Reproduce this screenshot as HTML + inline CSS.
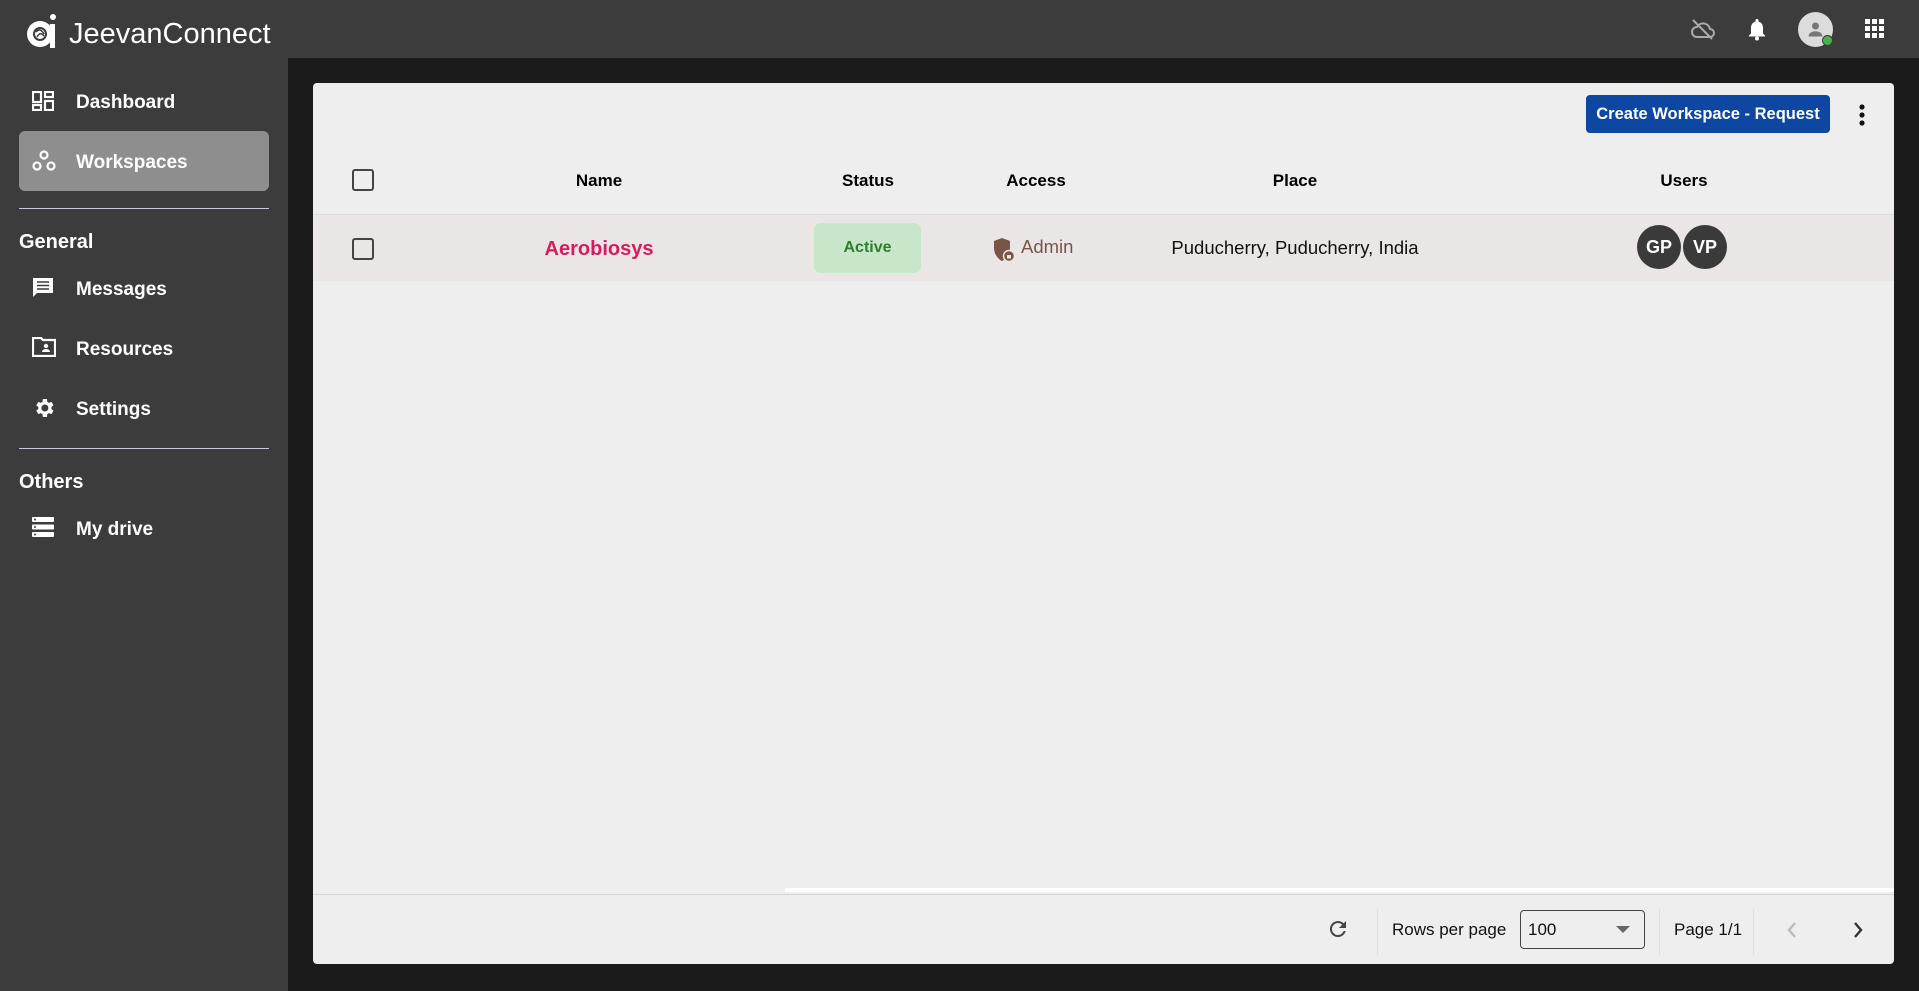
<!DOCTYPE html>
<html><head><meta charset="utf-8"><style>
*{box-sizing:border-box;margin:0;padding:0}
body{width:1919px;height:991px;overflow:hidden;background:#1b1b1b;font-family:"Liberation Sans","DejaVu Sans",sans-serif;position:relative}
.top{position:absolute;left:0;top:0;width:1919px;height:58px;background:#3c3c3c}
.side{position:absolute;left:0;top:58px;width:288px;height:933px;background:#3c3c3c;color:#fff}
.nav{position:absolute;left:76px;font-size:19px;font-weight:bold;color:#fff}
.ico{position:absolute;left:32px}
.sec{position:absolute;left:19px;font-size:20px;font-weight:bold}
.hr{position:absolute;left:19px;width:250px;height:1px;background:#c9c6d6}
.card{position:absolute;left:313px;top:83px;width:1581px;height:881px;background:#eeeeee;border-radius:4px;overflow:hidden}
.abs{position:absolute}
.th{position:absolute;top:170px;font-size:17px;font-weight:bold;color:#000;transform:translateX(-50%)}
.cb{position:absolute;width:22px;height:22px;border:2.5px solid #444;border-radius:3px}
</style></head><body>
<div class="top">
 <svg class="abs" style="left:26px;top:12px" width="32" height="38" viewBox="0 0 32 38"><circle cx="14" cy="22" r="13" fill="#fff"/><circle cx="14" cy="22" r="6" fill="none" stroke="#3c3c3c" stroke-width="2"/><path d="M10 20 q4 -5 8 2 M11 25 q3 -6 7 -1" stroke="#3c3c3c" stroke-width="1.5" fill="none"/><rect x="24" y="12" width="5" height="24" fill="#fff"/><circle cx="27" cy="5" r="3" fill="#fff"/></svg>
 <div class="abs" style="left:69px;top:18px;font-size:29px;color:#fff">JeevanConnect</div>
 <svg class="abs" style="left:1690px;top:17px" width="26" height="24" viewBox="0 0 26 24"><path d="M7 20h13a4 4 0 0 0 0-8 7 7 0 0 0-13-2 5 5 0 0 0 0 10z" fill="none" stroke="#aaa" stroke-width="2"/><path d="M3 3l19 19" stroke="#aaa" stroke-width="2"/></svg>
 <svg class="abs" style="left:1747px;top:17px" width="20" height="24" viewBox="0 0 20 24"><path d="M10 2a1.5 1.5 0 0 1 1.5 1.5v1a6 6 0 0 1 4.5 6v6l2 2v1H2v-1l2-2v-6a6 6 0 0 1 4.5-6v-1A1.5 1.5 0 0 1 10 2z" fill="#fff"/><circle cx="10" cy="21.5" r="2" fill="#fff"/></svg>
 <div class="abs" style="left:1798px;top:12px;width:35px;height:35px;border-radius:50%;background:#dcdcdc"></div>
 <svg class="abs" style="left:1805px;top:19px" width="21" height="21" viewBox="0 0 24 24"><circle cx="12" cy="8" r="4" fill="#777"/><path d="M4 20c0-4 4-6 8-6s8 2 8 6z" fill="#777"/></svg>
 <div class="abs" style="left:1822px;top:35px;width:11px;height:11px;border-radius:50%;background:#4caf50;border:1.5px solid #3c3c3c"></div>
 <svg class="abs" style="left:1865px;top:19px" width="19" height="19" viewBox="0 0 19 19" fill="#fff"><rect x="0" y="0" width="5" height="5"/><rect x="7" y="0" width="5" height="5"/><rect x="14" y="0" width="5" height="5"/><rect x="0" y="7" width="5" height="5"/><rect x="7" y="7" width="5" height="5"/><rect x="14" y="7" width="5" height="5"/><rect x="0" y="14" width="5" height="5"/><rect x="7" y="14" width="5" height="5"/><rect x="14" y="14" width="5" height="5"/></svg>
</div>
<div class="side">
 <div class="abs" style="left:19px;top:73px;width:250px;height:60px;background:#8e8e8e;border-radius:6px"></div>
 <svg class="ico" style="top:33px" width="22" height="20" viewBox="0 0 22 20" fill="none" stroke="#fff" stroke-width="2.2"><rect x="1" y="1" width="8" height="10"/><rect x="13" y="1" width="8" height="5"/><rect x="1" y="14" width="8" height="5"/><rect x="13" y="10" width="8" height="9"/></svg>
 <div class="nav" style="top:34px">Dashboard</div>
 <svg class="ico" style="top:92px" width="24" height="22" viewBox="0 0 24 22" fill="none" stroke="#fff" stroke-width="2.2"><circle cx="12" cy="5" r="3.5"/><circle cx="5" cy="16" r="3.5"/><circle cx="19" cy="16" r="3.5"/></svg>
 <div class="nav" style="top:94px">Workspaces</div>
 <div class="hr" style="top:150px"></div>
 <div class="sec" style="top:173px">General</div>
 <svg class="ico" style="top:219px" width="22" height="22" viewBox="0 0 22 22"><path d="M1 1h20v15H5l-4 4z" fill="#fff"/><path d="M5 5h12M5 8.5h12M5 12h12" stroke="#3c3c3c" stroke-width="1.6"/></svg>
 <div class="nav" style="top:221px">Messages</div>
 <svg class="ico" style="top:279px" width="24" height="20" viewBox="0 0 24 20"><path d="M1 1h8l2 2h12v16H1z" fill="none" stroke="#fff" stroke-width="2.2"/><circle cx="14" cy="9" r="2.2" fill="#fff"/><path d="M10 15c0-2 2-3 4-3s4 1 4 3z" fill="#fff"/></svg>
 <div class="nav" style="top:281px">Resources</div>
 <svg class="ico" style="top:338px" width="24" height="24" viewBox="0 0 24 24"><path fill="#fff" d="M19.4 13a7.5 7.5 0 0 0 0-2l2.1-1.6-2-3.5-2.5 1a7 7 0 0 0-1.7-1L14.9 3h-4l-.4 2.9a7 7 0 0 0-1.7 1l-2.5-1-2 3.5L6.4 11a7.5 7.5 0 0 0 0 2l-2.1 1.6 2 3.5 2.5-1a7 7 0 0 0 1.7 1l.4 2.9h4l.4-2.9a7 7 0 0 0 1.7-1l2.5 1 2-3.5zM12.9 15.5a3.5 3.5 0 1 1 0-7 3.5 3.5 0 0 1 0 7z"/></svg>
 <div class="nav" style="top:341px">Settings</div>
 <div class="hr" style="top:390px"></div>
 <div class="sec" style="top:413px">Others</div>
 <svg class="ico" style="top:459px" width="22" height="20" viewBox="0 0 22 20" fill="#fff"><rect x="0" y="0" width="22" height="5" rx="1"/><rect x="0" y="7.5" width="22" height="5" rx="1"/><rect x="0" y="15" width="22" height="5" rx="1"/><circle cx="3" cy="2.5" r="1" fill="#3c3c3c"/><circle cx="3" cy="10" r="1" fill="#3c3c3c"/><circle cx="3" cy="17.5" r="1" fill="#3c3c3c"/></svg>
 <div class="nav" style="top:461px">My drive</div>
</div>
<div class="card">
 <div class="abs" style="left:1273px;top:12px;width:244px;height:38px;background:#0d47a1;border-radius:4px;color:#fff;font-size:16.5px;font-weight:bold;line-height:38px;text-align:center">Create Workspace - Request</div>
 <svg class="abs" style="left:1545px;top:20px" width="8" height="24" viewBox="0 0 8 24" fill="#111"><circle cx="4" cy="4" r="2.6"/><circle cx="4" cy="12" r="2.6"/><circle cx="4" cy="20" r="2.6"/></svg>
 <div class="cb" style="left:39px;top:86px"></div>
 <div class="th" style="left:286px;top:88px">Name</div>
 <div class="th" style="left:555px;top:88px">Status</div>
 <div class="th" style="left:723px;top:88px">Access</div>
 <div class="th" style="left:982px;top:88px">Place</div>
 <div class="th" style="left:1371px;top:88px">Users</div>
 <div class="abs" style="left:0;top:131px;width:1581px;height:67px;background:#eae6e5;border-top:1px solid #ddd"></div>
 <div class="cb" style="left:39px;top:155px"></div>
 <div class="abs" style="left:286px;top:155px;transform:translateX(-50%);font-size:20px;font-weight:bold;color:#d81b60">Aerobiosys</div>
 <div class="abs" style="left:501px;top:140px;width:107px;height:50px;background:#c8e6c9;border-radius:7px;color:#2e7d32;font-size:16px;font-weight:bold;line-height:50px;text-align:center">Active</div>
 <svg class="abs" style="left:680px;top:154px" width="24" height="26" viewBox="0 0 24 26"><path d="M9 1l8 3v7c0 6-4 11-8 13-4-2-8-7-8-13V4z" fill="#795548"/><circle cx="16" cy="19" r="5.5" fill="#795548" stroke="#eae6e5" stroke-width="1.5"/><rect x="14" y="18" width="4" height="3.5" fill="#eae6e5"/></svg>
 <div class="abs" style="left:708px;top:153px;font-size:18.5px;color:#795548">Admin</div>
 <div class="abs" style="left:982px;top:154px;transform:translateX(-50%);font-size:18.5px;color:#111;white-space:nowrap">Puducherry, Puducherry, India</div>
 <div class="abs" style="left:1324px;top:142px;width:44px;height:44px;border-radius:50%;background:#3a3a3a;color:#fff;font-size:18px;font-weight:bold;line-height:44px;text-align:center">GP</div>
 <div class="abs" style="left:1370px;top:142px;width:44px;height:44px;border-radius:50%;background:#3a3a3a;color:#fff;font-size:18px;font-weight:bold;line-height:44px;text-align:center">VP</div>
 <div class="abs" style="left:472px;top:805px;width:1109px;height:4px;background:#fff"></div>
 <div class="abs" style="left:0;top:811px;width:1581px;height:1px;background:#d6d6d6"></div>
 <svg class="abs" style="left:1013px;top:834px" width="24" height="24" viewBox="0 0 24 24"><path d="M17.6 6.4A8 8 0 1 0 19.7 14h-2.1a6 6 0 1 1-1.4-6.2L13 11h7V4z" fill="#444"/></svg>
 <div class="abs" style="left:1064px;top:826px;width:1px;height:46px;background:#ddd"></div>
 <div class="abs" style="left:1079px;top:837px;font-size:17px;color:#111">Rows per page</div>
 <div class="abs" style="left:1207px;top:827px;width:125px;height:39px;border:1.5px solid #444;border-radius:4px;font-size:17px;color:#111;padding:9px 7px">100</div>
 <svg class="abs" style="left:1303px;top:843px" width="14" height="8" viewBox="0 0 14 8"><path d="M0 0h14L7 7z" fill="#666"/></svg>
 <div class="abs" style="left:1346px;top:826px;width:1px;height:46px;background:#ddd"></div>
 <div class="abs" style="left:1361px;top:837px;font-size:17px;color:#111">Page 1/1</div>
 <div class="abs" style="left:1440px;top:826px;width:1px;height:46px;background:#ddd"></div>
 <svg class="abs" style="left:1473px;top:838px" width="12" height="18" viewBox="0 0 12 18"><path d="M9 2L3 9l6 7" fill="none" stroke="#bbb" stroke-width="2.4"/></svg>
 <svg class="abs" style="left:1539px;top:838px" width="12" height="18" viewBox="0 0 12 18"><path d="M3 2l6 7-6 7" fill="none" stroke="#333" stroke-width="2.4"/></svg>
</div>
</body></html>
